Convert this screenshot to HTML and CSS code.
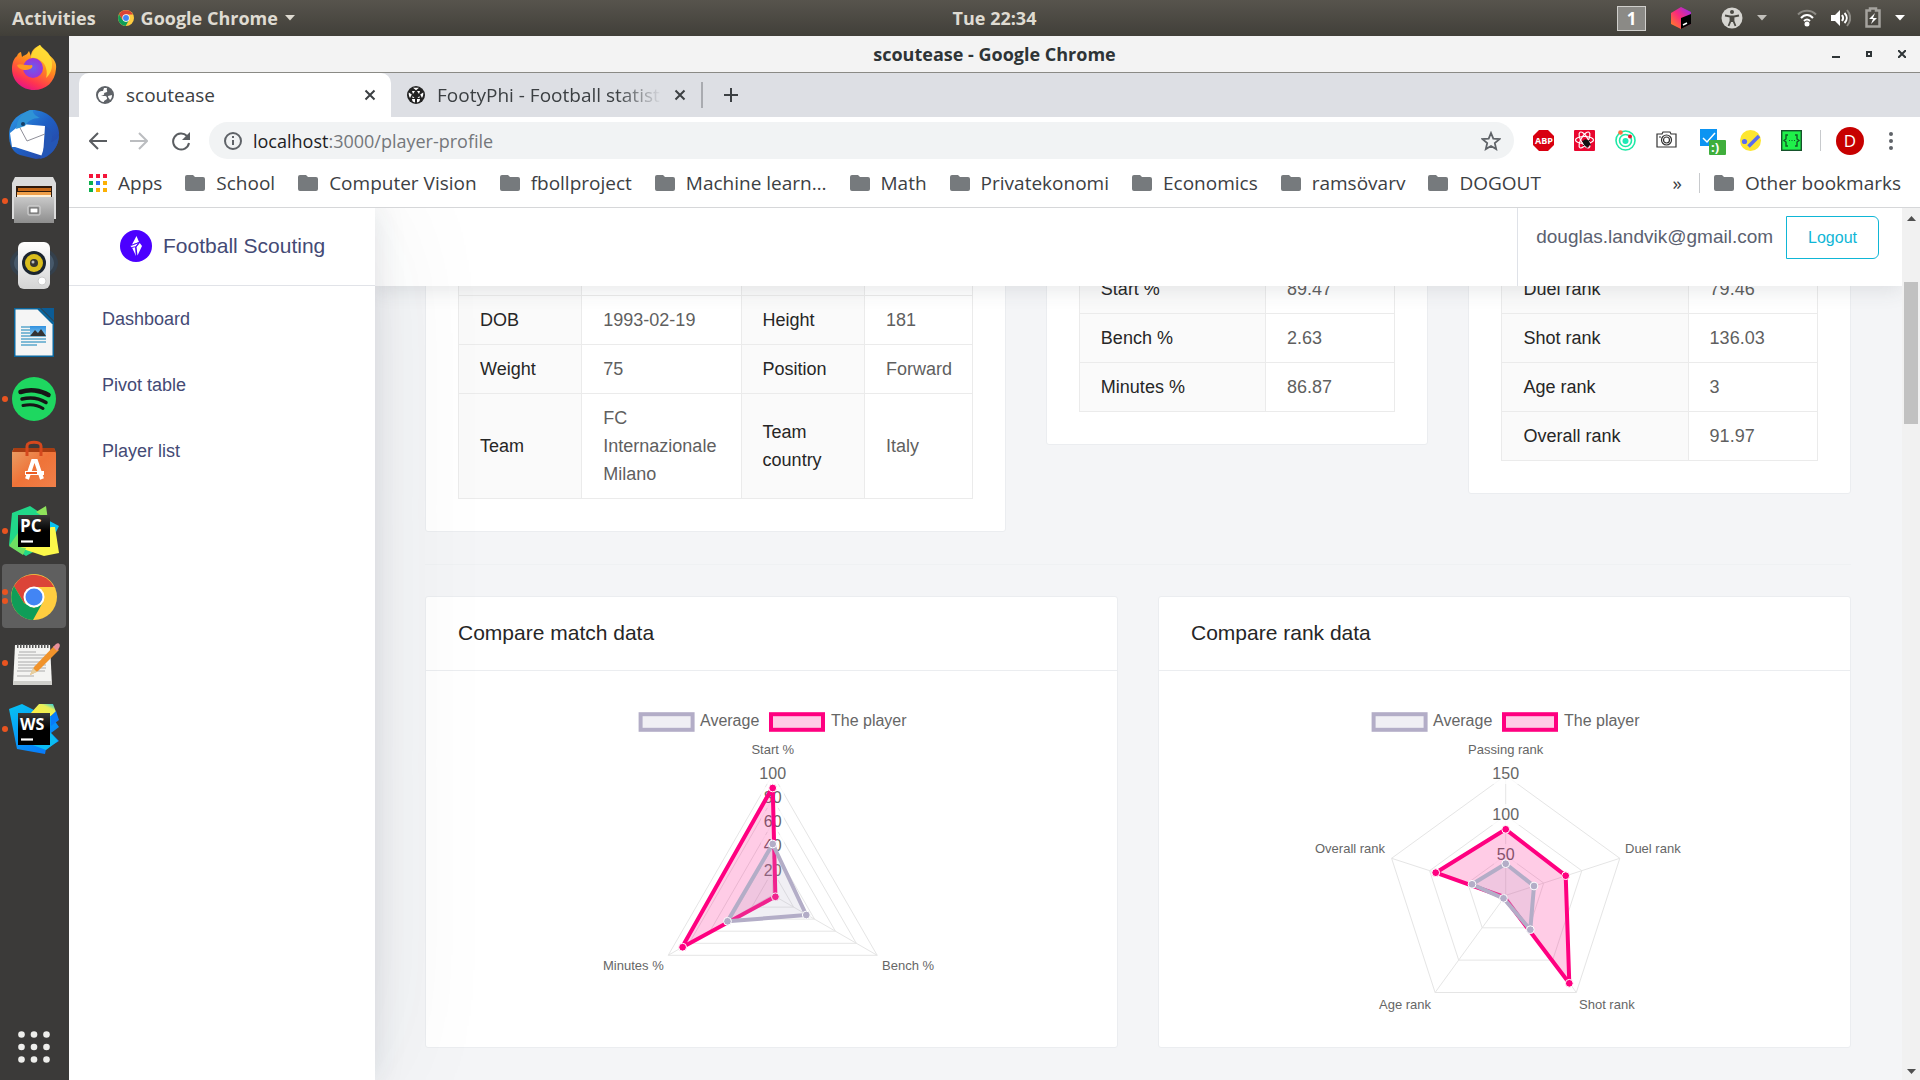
FILE: index.html
```html
<!DOCTYPE html>
<html lang="en">
<head>
<meta charset="utf-8">
<title>scoutease - Google Chrome</title>
<link rel="stylesheet" href="styles.css">
</head>
<body>
<svg class="defs" width="0" height="0" aria-hidden="true">
  <defs>
    <linearGradient id="ffBody" x1="0.8" y1="0" x2="0.3" y2="1"><stop offset="0" stop-color="#ffe43a"/><stop offset="0.45" stop-color="#ff8a1e"/><stop offset="0.8" stop-color="#ff3450"/><stop offset="1" stop-color="#e3128a"/></linearGradient>
    <radialGradient id="ffCore"><stop offset="0" stop-color="#6a5cf0"/><stop offset="1" stop-color="#9a35d6"/></radialGradient>
    <linearGradient id="tbBody" x1="0" y1="0" x2="1" y2="1"><stop offset="0" stop-color="#2f9ee8"/><stop offset="0.5" stop-color="#1f5fc4"/><stop offset="1" stop-color="#2a3f9c"/></linearGradient>
    <linearGradient id="cabinet" x1="0" y1="0" x2="0" y2="1"><stop offset="0" stop-color="#c9c9c9"/><stop offset="1" stop-color="#8d8d8d"/></linearGradient>
    <linearGradient id="speaker" x1="0" y1="0" x2="0" y2="1"><stop offset="0" stop-color="#ffffff"/><stop offset="1" stop-color="#d4d4d4"/></linearGradient>
    <linearGradient id="bag" x1="0" y1="0" x2="1" y2="1"><stop offset="0" stop-color="#e9a067"/><stop offset="0.5" stop-color="#ef7338"/><stop offset="1" stop-color="#f0804a"/></linearGradient>
    <linearGradient id="sky" x1="0" y1="0" x2="0" y2="1"><stop offset="0" stop-color="#2f8fdf"/><stop offset="1" stop-color="#8fd0f5"/></linearGradient>
    <linearGradient id="ideSquare" x1="0" y1="0" x2="0" y2="1"><stop offset="0" stop-color="#3a3a3a"/><stop offset="0.5" stop-color="#000"/></linearGradient>
    <linearGradient id="wsTip" x1="0" y1="1" x2="1" y2="0"><stop offset="0.2" stop-color="#fff045"/><stop offset="0.7" stop-color="#e8f05a"/><stop offset="1" stop-color="#08c3f2"/></linearGradient>
    <linearGradient id="wsBlue" x1="0" y1="0" x2="0.6" y2="1"><stop offset="0" stop-color="#07c3f2"/><stop offset="1" stop-color="#087cfa"/></linearGradient>
    <linearGradient id="jb" x1="0" y1="1" x2="1" y2="0"><stop offset="0" stop-color="#ff8a1a"/><stop offset="0.5" stop-color="#fc2a7b"/><stop offset="1" stop-color="#8a2cf5"/></linearGradient>
    <symbol id="chrome" viewBox="0 0 46 46">
      <circle cx="23" cy="23" r="23" fill="#ffcd40"/>
      <path d="M23 23 13 29 3 12A23 23 0 0 1 43 13H23Z" fill="#db4437"/>
      <path d="M3 12 13 29 23 34 32 28 22 46A23 23 0 0 1 3 12Z" fill="#0f9d58"/>
      <circle cx="23" cy="23" r="10.500" fill="#fff"/>
      <circle cx="23" cy="23" r="8.500" fill="#4285f4"/>
    </symbol>
    <symbol id="folder" viewBox="0 0 20 16"><path d="M2 0h6l2 2h8a2 2 0 0 1 2 2v10a2 2 0 0 1-2 2H2a2 2 0 0 1-2-2V2a2 2 0 0 1 2-2Z" fill="#767a7d"/></symbol>
    <symbol id="close" viewBox="0 0 12 12"><path d="M1.500 1.500l9 9M10.500 1.500l-9 9" stroke="#3c4043" stroke-width="2" fill="none"/></symbol>
    <symbol id="caret" viewBox="0 0 10 6"><path d="M0 0h10L5 5.500Z" fill="currentColor"/></symbol>
  </defs>
</svg>

<div class="desktop">
  <header class="topbar">
    <div class="topbar-left">
      <button class="plain">Activities</button>
      <button class="plain app-menu"><svg width="16" height="16"><use href="#chrome"/></svg>Google Chrome<svg width="10" height="6"><use href="#caret"/></svg></button>
    </div>
    <button class="plain clock">Tue 22:34</button>
    <div class="tray">
      <div class="tray-group spread"><span class="workspace">1</span>
      <svg class="jetbrains" width="20" height="22" viewBox="0 0 20 22"><path d="M10 0 20 5v12l-10 5L0 17V6Z" fill="url(#jb)"/><path d="M10 11 20 7v10l-10 5Z" fill="#000"/><path d="M12 18l4-2" stroke="#fff" stroke-width="1.500"/></svg></div>
      <div class="tray-group">
        <svg width="22" height="22" viewBox="0 0 22 22"><circle cx="11" cy="11" r="10.500" fill="#d6d5d1"/><circle cx="11" cy="5" r="2" fill="#4b4a44"/><path d="M4 8.500l5 1h4l5-1M9.500 10v4L7.500 19M12.500 10v4l2 5" fill="none" stroke="#4b4a44" stroke-width="1.800"/><path d="M9 9h4v6H9Z" fill="#4b4a44"/></svg>
        <svg class="dim" width="10" height="6"><use href="#caret"/></svg>
      </div>
      <div class="tray-group">
        <svg width="20" height="18" viewBox="0 0 20 18" fill="none" stroke="#fff" stroke-width="2"><path d="M1 5.500C6 .500 14 .500 19 5.500" stroke="#8c8a84"/><path d="M4 9c3.500-4 8.500-4 12 0M7 12c2-2 4-2 6 0"/><circle cx="10" cy="15" r="1.500" fill="#fff"/></svg>
        <svg width="20" height="18" viewBox="0 0 20 18"><path d="M0 6h4l5-5v16l-5-5H0Z" fill="#fff"/><path d="M11 6c1.500 2 1.500 4 0 6M13.500 4c3 3 3 7 0 10" stroke="#fff" stroke-width="2" fill="none"/><path d="M16 1c4 5 4 11 0 16" stroke="#8c8a84" stroke-width="2" fill="none"/></svg>
        <svg width="16" height="22" viewBox="0 0 16 22"><path d="M1.500 3.500H5V1.500h6v2h3.500v16h-13Z" fill="none" stroke="#a5a39e" stroke-width="2.500"/><path d="M10 6 4 12h4l-2 5 6-6H8Z" fill="#fff"/></svg>
        <svg width="10" height="6"><use href="#caret"/></svg>
      </div>
    </div>
  </header>

  <div class="workarea">
    <nav class="dock" aria-label="Dock">
      <button class="dock-item" aria-label="Firefox"><svg viewBox="0 0 64 64">
        <path d="M38 9c2 4 6 5 9 10 5 4 8 8 7 14-1 13-10 21-22 21S10 45 10 33c0-6 2-11 5-13 1-3 3-4 4-4l1 5c2-2 4-2 5-3l2-3 2 5c0-6 5-9 9-11Z" fill="url(#ffBody)"/>
        <circle cx="31" cy="32" r="10" fill="url(#ffCore)"/>
        <path d="M38 9c3 4 8 6 10 11 4 8 2 17-4 22 2-6 0-14-5-17-3-3-7-4-10-3 0-6 5-10 9-13Z" fill="#ffdf35" opacity=".85"/>
        <path d="M15 29c4-2 8 1 15 0 2 3-3 5-8 5-4-1-6-2-7-5Z" fill="#ff9a22"/></svg></button>
      <button class="dock-item" aria-label="Thunderbird"><svg viewBox="0 0 64 64">
        <path d="M28 8c14-1 28 8 29 23 0 12-6 21-15 25l-8 1-16-4C10 50 7 42 7 33c0-10 5-17 12-21Z" fill="url(#tbBody)"/>
        <path d="M10 45 8 31l11-9 24 2-2 30-28-9Z" fill="#fff"/><path d="M17 24l8 15 18-7" fill="none" stroke="#8f8f99" stroke-width="1"/>
        <path d="M15 22c2-8 9-14 16-14-1 3 3 6 7 8-8 0-12 3-15 8l-9 3Z" fill="#2f93d6"/><circle cx="21" cy="22" r="2" fill="#153e66"/>
        <path d="M43 24c2 10 0 22-5 33 11-3 19-12 19-24-3 6-7 7-8 7 3-7 0-13-6-16Z" fill="#2456b5"/></svg></button>
      <button class="dock-item" aria-label="Files"><svg viewBox="0 0 64 64">
        <path d="M13 9h38l3 6v36H10V15Z" fill="#dcdcdc"/><path d="M14 18h36v12H14Z" fill="#2e1a0c"/>
        <path d="M16 20h33v3H16Z" fill="#c7691a"/><path d="M15 24h34v4H15Z" fill="#f0a04a"/><path d="M15 27h34v2H15Z" fill="#fff0d8"/>
        <path d="M12 29h40v26H12Z" fill="url(#cabinet)"/><rect x="26" y="38" width="12" height="9" rx="1" fill="#9d9d9d" stroke="#d8d8d8"/><rect x="28" y="40" width="8" height="5" fill="#fff" stroke="#666"/></svg><i class="dot"></i></button>
      <button class="dock-item" aria-label="Rhythmbox"><svg viewBox="0 0 64 64">
        <ellipse cx="32" cy="29" rx="24" ry="17" fill="#34404c"/><ellipse cx="32" cy="29" rx="20" ry="14" fill="#46586a"/>
        <rect x="16" y="8" width="32" height="47" rx="6" fill="url(#speaker)"/><circle cx="32" cy="29" r="12" fill="#1b2530"/><circle cx="32" cy="29" r="9" fill="#d9bd1d"/><circle cx="32" cy="29" r="4" fill="#333"/><circle cx="31" cy="28" r="1.500" fill="#bbb"/><circle cx="40" cy="47" r="4" fill="#fff" stroke="#ccc"/></svg></button>
      <button class="dock-item" aria-label="LibreOffice Writer"><svg viewBox="0 0 64 64">
        <path d="M12 8h26l14 14v35H12Z" fill="#0a659c"/><path d="M39 8h13v13Z" fill="#0b5c96"/><path d="M13.500 9.500h22l15 15v31h-37Z" fill="#f5f5f5"/>
        <path d="M19 27h25M19 30h25M19 33h25M19 36h25M19 39h25M19 42h25M19 45h16" stroke="#5aa7cc" stroke-width="1.500"/><rect x="28" y="26" width="16" height="10" fill="url(#sky)"/><path d="M28 36l5-6 3 3 3-4 5 7Z" fill="#333"/></svg></button>
      <button class="dock-item" aria-label="Spotify"><svg viewBox="0 0 64 64"><circle cx="32" cy="33" r="22" fill="#1ed760"/>
        <g fill="none" stroke="#161616" stroke-linecap="round"><path d="M18.500 26c9-3 20-2 28 3" stroke-width="4.500"/><path d="M20 33c8-2 17-1 24 3.500" stroke-width="3.500"/><path d="M21 39.500c7-1.500 14-1 20 3" stroke-width="3"/></g></svg><i class="dot"></i></button>
      <button class="dock-item" aria-label="Ubuntu Software"><svg viewBox="0 0 64 64">
        <path d="M12 16h40l2 5v34H10V20Z" fill="url(#bag)"/><path d="M12 16h40l2 4H10Z" fill="#a83d12"/><path d="M25 24V14c0-5 14-5 14 0v10" fill="none" stroke="#d5481d" stroke-width="3"/>
        <path d="M25 47l6-18h3l6 18" fill="none" stroke="#fff" stroke-width="4"/><path d="M23 41h19" stroke="#fff" stroke-width="4"/><path d="M24 41h11" stroke="#ec5c24" stroke-width="2"/></svg></button>
      <button class="dock-item" aria-label="PyCharm"><svg viewBox="0 0 64 64">
        <path d="M10 15 28 8l12 8v33L24 58 7 47Z" fill="#21d789"/><path d="M34 14l10-6 2 14Z" fill="#8fe35b"/><path d="M38 18l19 10-7 14Z" fill="#07c3f2"/><path d="M49 29h4l4 26-15 3-24-8Z" fill="#fcf84a"/><path d="M7 48 16 35v14l8 1-3 7Z" fill="#6fdf62"/>
        <rect x="16" y="17" width="32" height="32" fill="url(#ideSquare)"/><path d="M19 43.500h12" stroke="#fff" stroke-width="2.200"/><text class="ide-label" x="18" y="34">PC</text></svg><i class="dot"></i></button>
      <button class="dock-item active" aria-label="Google Chrome"><svg viewBox="0 0 64 64"><use href="#chrome" x="9" y="10" width="46" height="46"/></svg><i class="dot"></i><i class="dot second"></i></button>
      <button class="dock-item" aria-label="Text Editor"><svg viewBox="0 0 64 64">
        <path d="M13 15h35l2 40H11Z" fill="#f4f4f2"/><path d="M11 51h39v4H11Z" fill="#cfcfcb"/><path d="M15 16h33" stroke="#555" stroke-width="4" stroke-dasharray="1.500 1.500"/>
        <path d="M17 22h17M16 25h28M16 28h28M16 32h28M16 35h28M16 38h28M15 41h28M15 46h17" stroke="#aaa"/><path d="M28 45l4-8 20-21 5 4-21 21Z" fill="#f0932b"/><path d="M28 45l3-7 4 4Z" fill="#e6cfa0"/><path d="M51 17l3-3c3-2 5 1 3 4l-2 3Z" fill="#e8909a"/></svg><i class="dot"></i></button>
      <button class="dock-item" aria-label="WebStorm"><svg viewBox="0 0 64 64">
        <path d="M7 13 20 8l12 6 8-4 8 8 9 13-8 6 8 8-13 8-1 5-28-5Z" fill="url(#wsBlue)"/><path d="M28 18l9-10h14l3 8-5 4Z" fill="url(#wsTip)"/><path d="M49 20l5-5 3 9-8 6Z" fill="#087cfa"/><path d="M28 48l16 6 12-9-8-9Z" fill="#0bbdf3"/>
        <rect x="16" y="17" width="32" height="32" fill="url(#ideSquare)"/><path d="M19 43.500h12" stroke="#fff" stroke-width="2.200"/><text class="ide-label narrow" x="18" y="34">WS</text></svg><i class="dot"></i></button>
      <button class="dock-item show-apps" aria-label="Show applications"><svg viewBox="0 0 64 64" fill="#eeeeec"><g id="dots"><circle cx="19.500" cy="19.500" r="3.300"/><circle cx="32" cy="19.500" r="3.300"/><circle cx="44.500" cy="19.500" r="3.300"/></g><use href="#dots" y="12.500"/><use href="#dots" y="25"/></svg></button>
    </nav>

    <section class="window">
      <div class="titlebar">
        <span></span><strong>scoutease - Google Chrome</strong>
        <div class="window-controls">
          <button class="plain" aria-label="Minimize"><svg width="8" height="8"><path d="M0 7h8" stroke="#2e3436" stroke-width="2"/></svg></button>
          <button class="plain" aria-label="Maximize"><svg width="6" height="6"><path d="M1 1h4v4H1Z" fill="none" stroke="#2e3436" stroke-width="2"/></svg></button>
          <button class="plain" aria-label="Close"><svg width="8" height="8"><path d="M0 0l8 8M8 0 0 8" stroke="#2e3436" stroke-width="2"/></svg></button>
        </div>
      </div>

      <div class="tabs">
        <div class="tab active">
          <svg width="18" height="18" viewBox="0 0 18 18"><circle cx="9" cy="9" r="9" fill="#5f6368"/><path d="M2 10c0-4 2-5 5-5l1-3h3c-1 2 1 3 0 4L8 7c1 2-1 2-3 3h4c2 0 2 2 2 3l-3 2v1C5 16 3 14 2 10ZM16 9c0 3-1 4-2 5-1-2-2-2-2-4Z" fill="#fff"/></svg>
          <span class="tab-title">scoutease</span>
          <button class="plain" aria-label="Close tab"><svg width="12" height="12"><use href="#close"/></svg></button>
        </div>
        <div class="tab">
          <svg width="18" height="18" viewBox="0 0 18 18"><circle cx="9" cy="9" r="9" fill="#222"/><path d="M6 1.800h6L9 4.200ZM1.800 6.500l3 2L3 12C1.800 10 1.500 8 1.800 6.500ZM16.200 6.500l-3 2L15 12c1.200-2 1.500-4 1.200-5.500ZM5 13h3v3.500c-2-.3-3-1.500-3-3.500ZM13 13h-3v3.500c2-.3 3-1.500 3-3.500ZM5 5l3 0-2 3ZM13 5h-3l2 3ZM5.500 10l2 2h-2ZM12.500 10l-2 2h2Z" fill="#fff"/></svg>
          <span class="tab-title fade">FootyPhi - Football statist</span>
          <button class="plain" aria-label="Close tab"><svg width="12" height="12"><use href="#close"/></svg></button>
        </div>
        <button class="plain new-tab" aria-label="New tab"><svg width="16" height="16"><path d="M8 1v14M1 8h14" stroke="#3c4043" stroke-width="2"/></svg></button>
      </div>

      <div class="toolbar">
        <div class="nav-buttons">
          <button class="plain" aria-label="Back"><svg width="18" height="18" fill="none" stroke="#5a5d61" stroke-width="2"><path d="M18 9H2M9 1 1 9l8 8"/></svg></button>
          <button class="plain" aria-label="Forward"><svg width="18" height="18" fill="none" stroke="#bbbdc0" stroke-width="2"><path d="M0 9h16M9 1l8 8-8 8"/></svg></button>
          <button class="plain" aria-label="Reload"><svg width="20" height="20" fill="none" stroke="#5a5d61" stroke-width="2"><path d="M16 5a8 8 0 1 0 2 7"/><path d="M19 1v8h-8Z" fill="#5a5d61" stroke="none"/></svg></button>
        </div>
        <div class="omnibox">
          <svg width="18" height="18" fill="none" stroke="#5f6368" stroke-width="2"><circle cx="9" cy="9" r="8"/><path d="M9 8v5M9 4v2"/></svg>
          <a class="url" href="#profile"><b>localhost</b>:3000/player-profile</a>
          <button class="plain" aria-label="Bookmark this page"><svg width="20" height="20" viewBox="0 0 20 20"><path d="M10 2l2.300 5.600 6.200.5-4.700 4 1.400 6L10 15l-5.200 3.100 1.400-6-4.700-4 6.200-.5Z" fill="none" stroke="#5f6368" stroke-width="1.800"/></svg></button>
        </div>
        <div class="extensions">
          <svg width="21" height="21" viewBox="0 0 21 21"><path d="M6 0h9l6 6v9l-6 6H6l-6-6V6Z" fill="#d80010"/><text class="abp" x="2" y="14">ABP</text></svg>
          <svg width="21" height="21" viewBox="0 0 21 21"><rect width="21" height="21" rx="1" fill="#e9062f"/><g fill="none" stroke="#fff" stroke-width="1.200"><ellipse cx="10.500" cy="10" rx="9" ry="3.500"/><ellipse cx="10.500" cy="10" rx="9" ry="3.500" transform="rotate(60 10.500 10)"/><ellipse cx="10.500" cy="10" rx="9" ry="3.500" transform="rotate(120 10.500 10)"/></g><ellipse cx="12.500" cy="13" rx="3" ry="4" transform="rotate(-40 12.500 13)" fill="#111"/><path d="M8 11l9 4M9 16l7-6M13 18l1-8" stroke="#111"/></svg>
          <svg width="21" height="21" viewBox="0 0 21 21"><g fill="none" stroke="#1de9a5" stroke-width="1.600"><circle cx="10.500" cy="10.500" r="9.500"/><circle cx="10.500" cy="10.500" r="6"/></g><circle cx="10.500" cy="11" r="3" fill="#1de9b6"/><circle cx="5.500" cy="2.500" r="2.300" fill="#ff7043"/><circle cx="15" cy="6.500" r="2" fill="#f1122b"/></svg>
          <svg width="21" height="21" viewBox="0 0 21 21" fill="none" stroke="#333" stroke-width="1.200"><path d="M1 4h5l1-2h7l1 2h5v13H1Z"/><circle cx="10.500" cy="10" r="5"/><circle cx="10.500" cy="10" r="3"/><path d="M3 7h2"/></svg>
          <svg class="wide-ext" width="26" height="28" viewBox="0 0 26 28"><rect x="0" y="2" width="17" height="17" fill="#0c94f2"/><path d="M3 11l4 4 8-9" stroke="#fff" stroke-width="1.500" fill="none"/><rect x="9" y="13" width="17" height="15" rx="1" fill="#3fae3c"/><text class="smile" x="11" y="25">:)</text></svg>
          <svg width="21" height="21" viewBox="0 0 21 21"><circle cx="10.500" cy="10.500" r="10.500" fill="#fde62f"/><circle cx="4.500" cy="11.500" r="2.600" fill="#5a6cf0"/><path d="M8.500 16.500 19 6" stroke="#5a6cf0" stroke-width="3.600"/></svg>
          <svg width="21" height="21" viewBox="0 0 21 21"><rect x=".7" y=".7" width="19.600" height="19.600" fill="#1ff04a" stroke="#15532b" stroke-width="1.400"/><path d="M7 5H5v4l-2 1.500L5 12v4h2M14 5h2v4l2 1.500-2 1.500v4h-2" fill="none" stroke="#125c26" stroke-width="1.400"/><path d="M8 10.500h6" stroke="#125c26" stroke-dasharray="1 1.500"/></svg>
        </div>
        <button class="avatar">D</button>
        <button class="plain menu" aria-label="Menu"><svg width="4" height="18" fill="#5f6368"><circle cx="2" cy="2" r="2"/><circle cx="2" cy="9" r="2"/><circle cx="2" cy="16" r="2"/></svg></button>
      </div>

      <nav class="bookmarks" aria-label="Bookmarks">
        <a href="#apps" class="apps"><svg width="18" height="18"><g fill="#f5153a"><path d="M0 0h4v4H0ZM7 0h4v4H7ZM14 0h4v4h-4Z"/></g><path d="M0 7h4v4H0ZM0 14h4v4H0Z" fill="#0cb04c"/><path d="M7 7h4v4H7Z" fill="#2f6df0"/><path d="M14 7h4v4h-4ZM7 14h4v4H7ZM14 14h4v4h-4Z" fill="#fbb004"/></svg>Apps</a>
        <a href="#b1"><svg width="20" height="16"><use href="#folder"/></svg>School</a>
        <a href="#b2"><svg width="20" height="16"><use href="#folder"/></svg>Computer Vision</a>
        <a href="#b3"><svg width="20" height="16"><use href="#folder"/></svg>fbollproject</a>
        <a href="#b4"><svg width="20" height="16"><use href="#folder"/></svg>Machine learn…</a>
        <a href="#b5"><svg width="20" height="16"><use href="#folder"/></svg>Math</a>
        <a href="#b6"><svg width="20" height="16"><use href="#folder"/></svg>Privatekonomi</a>
        <a href="#b7"><svg width="20" height="16"><use href="#folder"/></svg>Economics</a>
        <a href="#b8"><svg width="20" height="16"><use href="#folder"/></svg>ramsövarv</a>
        <a href="#b9"><svg width="20" height="16"><use href="#folder"/></svg>DOGOUT</a>
        <button class="plain more">»</button>
        <a href="#other" class="other"><svg width="20" height="16"><use href="#folder"/></svg>Other bookmarks</a>
      </nav>

      <div class="page" id="profile">
        <aside class="sidebar">
          <a class="brand" href="#home"><svg width="32" height="32" viewBox="0 0 32 32"><circle cx="16" cy="16" r="16" fill="#4b00ff"/><path d="M16.500 6 19 12l-7 2.500ZM19.800 13 22 16l-4.500 9.500-1-8.500ZM10 15.500l8.500-2.500-3 3.800L16 26l-4-8.500Z" fill="#fff"/><path d="M10 15.800 19.500 12.500M18.500 13.500 15.500 17l1 9M12 17.500l3.500-.8" stroke="#4b00ff" stroke-width=".9" fill="none"/></svg>Football Scouting</a>
          <nav class="menu-list"><a href="#dashboard">Dashboard</a><a href="#pivot">Pivot table</a><a href="#players">Player list</a></nav>
        </aside>

        <div class="main">
          <header class="app-header">
            <div class="account"><span>douglas.landvik@gmail.com</span><button class="logout">Logout</button></div>
          </header>
          <main class="content">
            <div class="summary">
              <section class="card padded">
                <table class="facts">
                  <colgroup><col class="c-label"><col class="c-long"><col class="c-label"><col></colgroup>
                  <tr class="spacer"><th></th><td></td><th></th><td></td></tr>
                  <tr><th>DOB</th><td>1993-02-19</td><th>Height</th><td>181</td></tr>
                  <tr><th>Weight</th><td>75</td><th>Position</th><td>Forward</td></tr>
                  <tr><th>Team</th><td>FC Internazionale Milano</td><th>Team country</th><td>Italy</td></tr>
                </table>
              </section>
              <section class="card padded lower">
                <table class="facts">
                  <colgroup><col class="c-half"><col></colgroup>
                  <tr><th>Start %</th><td>89.47</td></tr>
                  <tr><th>Bench %</th><td>2.63</td></tr>
                  <tr><th>Minutes %</th><td>86.87</td></tr>
                </table>
              </section>
              <section class="card padded lower">
                <table class="facts">
                  <colgroup><col class="c-half"><col></colgroup>
                  <tr><th>Duel rank</th><td>79.46</td></tr>
                  <tr><th>Shot rank</th><td>136.03</td></tr>
                  <tr><th>Age rank</th><td>3</td></tr>
                  <tr><th>Overall rank</th><td>91.97</td></tr>
                </table>
              </section>
            </div>
            <hr>
            <div class="charts">
              <section class="card">
                <h2>Compare match data</h2>
                <div class="chart">
                  <svg width="400" height="340" viewBox="12 0 400 340">
                    <g class="key"><rect class="avg" x="80.600" y="24.200" width="52" height="15.600"/><text x="140" y="36">Average</text><rect class="player" x="211" y="24.200" width="52" height="15.600"/><text x="271" y="36">The player</text></g>
                    <g class="grid"><path d="M212.700 180.900l20.900 36.200h-41.800ZM212.700 156.700l41.800 72.400h-83.600ZM212.700 132.600l62.700 108.600H150ZM212.700 108.500l83.600 144.800H129.100ZM212.700 84.300l104.500 181H108.200ZM212.700 205V84.300M212.700 205l104.500 60.300M212.700 205l-104.500 60.300"/></g>
                    <g class="backdrop"><rect x="197" y="73" width="31" height="21"/><rect x="201" y="97" width="23" height="21"/><rect x="201" y="121" width="23" height="21"/><rect x="201" y="145" width="23" height="21"/><rect x="201" y="169" width="23" height="21"/></g>
                    <g class="ticks"><text x="212.700" y="89">100</text><text x="212.700" y="113">80</text><text x="212.700" y="137">60</text><text x="212.700" y="161">40</text><text x="212.700" y="186">20</text></g>
                    <path class="player" d="M212.700 97l2.700 109.600-93.500 50.800Z"/>
                    <g class="player-pts"><circle cx="212.700" cy="98" r="3.900"/><circle cx="215.400" cy="206.800" r="3.900"/><circle cx="122.600" cy="257.200" r="3.900"/></g>
                    <path class="avg" d="M212.700 154l33.600 71-78.800 6.300Z"/>
                    <g class="avg-pts"><circle cx="212.700" cy="154" r="3.900"/><circle cx="246.300" cy="225" r="3.900"/><circle cx="167.500" cy="231.300" r="3.900"/></g>
                    <g class="labels"><text x="212.700" y="64" text-anchor="middle">Start %</text><text x="43" y="280">Minutes %</text><text x="322" y="280">Bench %</text></g>
                  </svg>
                </div>
              </section>
              <section class="card">
                <h2>Compare rank data</h2>
                <div class="chart">
                  <svg width="400" height="340" viewBox="24 0 400 340">
                    <g class="key"><rect class="avg" x="92.600" y="24.200" width="52" height="15.600"/><text x="152" y="36">Average</text><rect class="player" x="223" y="24.200" width="52" height="15.600"/><text x="283" y="36">The player</text></g>
                    <g class="grid"><path d="M224.700 165.400 262.700 193 248.200 237.800H201.200L186.700 193ZM224.700 125.400 300.800 180.700 271.700 270.100H177.700L148.600 180.700ZM224.700 85.400 338.800 168.300 295.300 302.500H154.100L110.600 168.300ZM224.700 205.400V85.400M224.700 205.400 338.800 168.300M224.700 205.400 295.300 302.500M224.700 205.400 154.100 302.500M224.700 205.400 110.600 168.300"/></g>
                    <g class="backdrop"><rect x="209" y="73" width="31" height="21"/><rect x="209" y="114" width="31" height="21"/><rect x="213" y="154" width="23" height="21"/></g>
                    <g class="ticks"><text x="224.700" y="89">150</text><text x="224.700" y="130">100</text><text x="224.700" y="170">50</text></g>
                    <path class="player" d="M224.700 139.300 284.700 185.700 288.300 293.300 223 207 154.700 182.700Z"/>
                    <g class="player-pts"><circle cx="224.700" cy="139.300" r="3.900"/><circle cx="284.700" cy="185.700" r="3.900"/><circle cx="288.300" cy="293.300" r="3.900"/><circle cx="154.700" cy="182.700" r="3.900"/></g>
                    <path class="avg" d="M224.700 173.700 253 196 249.300 239.700 222.500 208.300 191 194.300Z"/>
                    <g class="avg-pts"><circle cx="224.700" cy="173.700" r="3.900"/><circle cx="253" cy="196" r="3.900"/><circle cx="249.300" cy="239.700" r="3.900"/><circle cx="222.500" cy="208.300" r="3.900"/><circle cx="191" cy="194.300" r="3.900"/></g>
                    <g class="labels"><text x="224.700" y="64" text-anchor="middle">Passing rank</text><text x="344" y="163">Duel rank</text><text x="298" y="319">Shot rank</text><text x="98" y="319">Age rank</text><text x="34" y="163">Overall rank</text></g>
                  </svg>
                </div>
              </section>
            </div>
            <hr>
          </main>
        </div>

        <div class="scrollbar" aria-hidden="true">
          <svg width="18" height="22"><path d="M5 13h9L9.500 8Z" fill="#505050"/></svg>
          <div class="track"><div class="thumb"></div></div>
          <svg width="18" height="18"><path d="M5 7h9l-4.500 5Z" fill="#505050"/></svg>
        </div>
      </div>
    </section>
  </div>
</div>
</body>
</html>
```
FILE: styles.css
```css
* { box-sizing: border-box; }
body { margin: 0; font-family: "Open Sans", "Noto Sans", sans-serif; font-size: 19px; color: #3c4043; }
a { color: inherit; text-decoration: none; }
button { font: inherit; color: inherit; cursor: pointer; }
svg { display: block; flex: none; }
.defs { position: absolute; }
.plain { border: 0; background: none; padding: 0; display: flex; align-items: center; }

.desktop { display: flex; flex-direction: column; height: 100vh; overflow: hidden; }

/* system bar */
.topbar { flex: none; display: grid; grid-template-columns: 69px 1fr auto 1fr; align-items: center; height: 36px; background: linear-gradient(#57544d, #413f39); color: #dfdbd2; font-weight: 700; font-size: 18px; }
.topbar-left { grid-column: 1 / 3; display: flex; gap: 22px; padding-left: 12px; }
.app-menu { gap: 7px; }
.tray { display: flex; align-items: center; justify-content: flex-end; gap: 30px; padding-right: 15px; color: #fff; }
.tray-group { display: flex; align-items: center; gap: 14px; }
.spread { gap: 25px; }
.dim { color: #c2c0bb; }
.workspace { width: 29px; height: 25px; border: 1px solid #d0cfcc; background: #8b8a86; text-align: center; font-size: 17px; line-height: 23px; }

.workarea { flex: 1; display: flex; min-height: 0; }

/* dock */
.dock { flex: none; width: 69px; padding: 0 3px 0 2px; display: flex; flex-direction: column; gap: 2px; background: #3b3a39; }
.dock-item { position: relative; width: 64px; height: 64px; flex: none; padding: 0; border: 0; border-radius: 4px; background: none; }
.dock-item.active { background: #5f5f5f; }
.dock-item svg { width: 64px; height: 64px; }
.show-apps { margin-top: auto; margin-bottom: 1px; }
.dot { position: absolute; left: 0; top: 30px; width: 6px; height: 6px; border-radius: 50%; background: #e95420; }
.active .dot { top: 25px; }
.active .dot.second { top: 34px; }
.ide-label { font: 700 17px "Open Sans", sans-serif; fill: #fff; }
.ide-label.narrow { font-size: 16px; }

/* browser chrome */
.window { flex: 1; min-width: 0; display: flex; flex-direction: column; background: #fff; }
.titlebar { flex: none; display: grid; grid-template-columns: 1fr auto 1fr; align-items: center; height: 37px; border-bottom: 1px solid #8a8a85; background: #f3f3f3; color: #2e3436; font-size: 18px; }
.titlebar strong { font-weight: 700; }
.window-controls { display: flex; justify-content: flex-end; gap: 26px; padding-right: 14px; }

.tabs { flex: none; display: flex; height: 44px; padding-left: 10px; background: #dddfe4; }
.tab { display: flex; align-items: center; gap: 12px; width: 310px; padding: 0 15px 0 16px; }
.tab.active { width: 312px; border-radius: 10px 10px 0 0; background: #fff; padding: 0 15px 0 17px; }
.tab-title { flex: 1; white-space: nowrap; }
.fade { -webkit-mask-image: linear-gradient(90deg, #000 80%, transparent); mask-image: linear-gradient(90deg, #000 80%, transparent); }
.new-tab { align-self: center; height: 26px; padding-left: 20px; border-left: 2px solid #a9abb0; }

.toolbar { flex: none; display: flex; align-items: center; padding: 5px 27px 2px 20px; }
.nav-buttons { display: flex; gap: 23px; width: 120px; align-items: center; }
.omnibox { flex: 1; display: flex; align-items: center; gap: 11px; height: 37px; border-radius: 19px; padding: 0 13px 0 15px; background: #f1f3f4; }
.url { flex: 1; font-size: 18px; color: #74777b; }
.url b { font-weight: 400; color: #202124; }
.extensions { display: flex; align-items: center; gap: 20px; padding: 0 18px 0 19px; height: 21px; border-right: 1px solid #c8cacd; }
.wide-ext { margin: 0 -6px 0 3px; }
.abp { font: 700 9px "Open Sans", sans-serif; fill: #fff; }
.smile { font: 700 13px "Open Sans", sans-serif; fill: #fff; }
.avatar { width: 28px; height: 28px; margin: 0 25px 0 15px; padding: 0; border: 0; border-radius: 50%; background: #c70000; color: #fff; font-size: 17px; line-height: 28px; }

.bookmarks { flex: none; display: flex; align-items: center; gap: 23px; height: 47px; padding: 0 19px 2px 20px; border-bottom: 1px solid #d6d7d9; white-space: nowrap; }
.bookmarks a { display: flex; align-items: center; gap: 11px; }
.more { margin-left: auto; }
.bookmarks .other { padding-left: 14px; border-left: 1px solid #c8cacd; margin-left: -6px; height: 20px; }

/* application */
.page { flex: 1; display: flex; min-height: 0; overflow: hidden; font-family: "Liberation Sans", Arial, sans-serif; font-size: 18px; line-height: 28px; }
.sidebar { position: relative; z-index: 3; flex: none; width: 306px; background: #fff; color: #444a75; box-shadow: 0 0 130px rgba(40, 50, 60, 0.07), 0 0 30px rgba(40, 50, 70, 0.12); }
.brand { display: flex; align-items: center; gap: 11px; height: 78px; padding: 0 0 1px 51px; border-bottom: 1px solid #e1e3e8; font-size: 21px; }
.menu-list { display: flex; flex-direction: column; gap: 38px; padding: 19px 33px; }
.main { flex: 1; min-width: 0; background: #f4f5f7; overflow: hidden; }
.app-header { position: relative; z-index: 2; display: flex; justify-content: flex-end; height: 78px; background: #fff; box-shadow: 0 4px 20px rgba(60, 65, 75, 0.12); }
.account { display: flex; align-items: flex-start; gap: 13px; padding: 8px 23px 0 18px; border-left: 1px solid #dfe2e8; font-size: 19px; line-height: 42px; color: #5b6170; }
.logout { height: 43px; padding: 0 21px; border: 1px solid #0fb6d6; border-radius: 0 6px 6px 0; background: #fff; color: #0fb6d6; font-size: 16px; }

.content { margin-top: -40px; padding: 0 51px 0 50px; }
.summary { display: grid; grid-template-columns: 580fr 382fr 382fr; gap: 40px; align-items: start; }
.card { background: #fff; border: 1px solid #ebedf0; border-radius: 3px; }
.padded { padding: 0 32px 32px; }
.lower { padding-top: 17px; }
.facts { width: 100%; border-collapse: collapse; table-layout: fixed; }
.facts th, .facts td { padding: 10px 21px; border: 1px solid #ebebeb; text-align: left; font-weight: 400; }
.facts th { background: #fafafa; color: #262626; }
.facts td { color: #5f5f5f; }
.spacer { height: 48px; }
.c-label { width: 24%; }
.c-long { width: 31%; }
.c-half { width: 59%; }
hr { margin: 32px 0 31px; border: 0; border-top: 1px solid #eff1f3; }

.charts { display: grid; grid-template-columns: 1fr 1fr; gap: 40px; }
h2 { margin: 0; padding: 21px 32px 22px; border-bottom: 1px solid #ebedf0; font-size: 21px; font-weight: 400; line-height: 30px; color: #262626; }
.chart { display: flex; justify-content: center; padding: 19px 0 17px; }
.key text, .ticks text { font-size: 16px; fill: #666; }
.ticks { text-anchor: middle; }
.labels text { font-size: 13px; fill: #666; }
.grid { fill: none; stroke: #e5e5e5; stroke-width: 1; }
.backdrop { fill: #fff; fill-opacity: 0.75; }
.player, .avg { stroke-width: 4; stroke-linejoin: bevel; fill-opacity: 0.2; }
.key rect { stroke-linejoin: miter; }
.player { fill: #ff0080; stroke: #ff0080; }
.avg { fill: #b3adc7; stroke: #b3adc7; }
.player-pts, .avg-pts { stroke: #fff; stroke-width: 1; }
.player-pts { fill: #ff0080; }
.avg-pts { fill: #b3adc7; }

.scrollbar { flex: none; width: 18px; display: flex; flex-direction: column; background: #f1f1f1; position: relative; z-index: 4; }
.track { flex: 1; padding: 6% 2px 0; display: flex; flex-direction: column; }
.track::before { content: ""; flex: 51; }
.track::after { content: ""; flex: 634; }
.thumb { flex: 141; background: #c1c1c1; }
```
